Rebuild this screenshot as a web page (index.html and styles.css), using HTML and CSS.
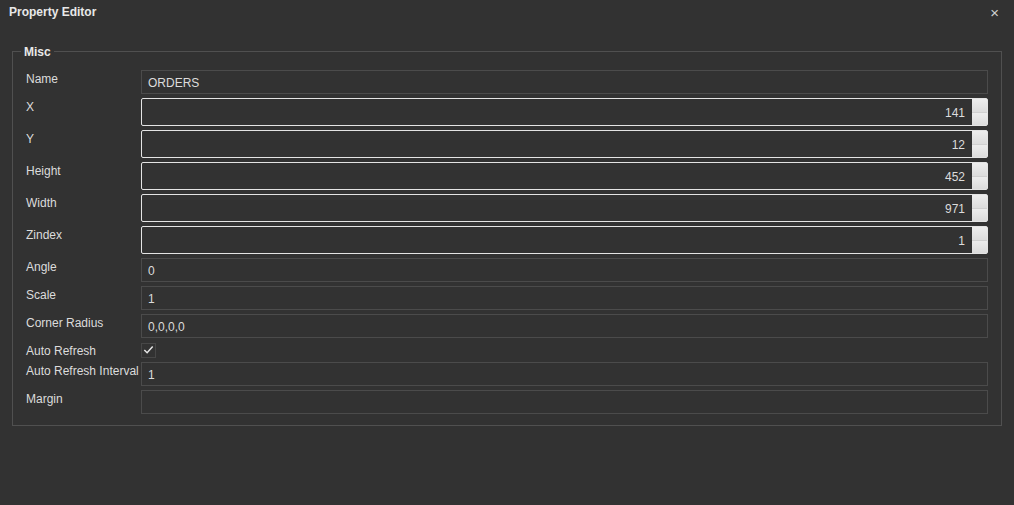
FILE: index.html
```html
<!DOCTYPE html>
<html>
<head>
<meta charset="utf-8">
<link rel="stylesheet" href="styles.css">
</head>
<body>
<div class="window">
  <header class="titlebar">
    <span class="title">Property Editor</span>
    <span class="close">×</span>
  </header>
  <fieldset class="group">
    <legend class="legend">Misc</legend>
    <div class="grid">
      <div class="label">Name</div>
      <div class="field text"><span>ORDERS</span></div>

      <div class="label">X</div>
      <div class="field spin"><span class="num">141</span><span class="spinbtn"><i></i><i></i></span></div>

      <div class="label">Y</div>
      <div class="field spin"><span class="num">12</span><span class="spinbtn"><i></i><i></i></span></div>

      <div class="label">Height</div>
      <div class="field spin"><span class="num">452</span><span class="spinbtn"><i></i><i></i></span></div>

      <div class="label">Width</div>
      <div class="field spin"><span class="num">971</span><span class="spinbtn"><i></i><i></i></span></div>

      <div class="label">Zindex</div>
      <div class="field spin"><span class="num">1</span><span class="spinbtn"><i></i><i></i></span></div>

      <div class="label">Angle</div>
      <div class="field text"><span>0</span></div>

      <div class="label">Scale</div>
      <div class="field text"><span>1</span></div>

      <div class="label">Corner Radius</div>
      <div class="field text"><span>0,0,0,0</span></div>

      <div class="label">Auto Refresh</div>
      <div class="checkrow">
        <span class="check">
          <svg width="14" height="14" viewBox="0 0 14 14"><path d="M2.5 7 L5.5 10 L11.5 3.2" fill="none" stroke="#e6e6e6" stroke-width="1.6"/></svg>
        </span>
      </div>

      <div class="label">Auto Refresh Interval</div>
      <div class="field text"><span>1</span></div>

      <div class="label">Margin</div>
      <div class="field text"><span></span></div>
    </div>
  </fieldset>
</div>
</body>
</html>
```

FILE: styles.css
```css
html, body {
  margin: 0;
  padding: 0;
  background: #323232;
  width: 1014px;
  height: 505px;
  overflow: hidden;
}
body {
  font-family: "Liberation Sans", Arial, sans-serif;
  font-size: 12px;
  color: #dcdcdc;
}
.titlebar {
  height: 24px;
  display: flex;
  align-items: center;
  justify-content: space-between;
  padding: 0 15px 0 9px;
}
.title {
  font-weight: bold;
  color: #e8e8e8;
  font-size: 12px;
}
.close {
  font-size: 15px;
  color: #d0d0d0;
}
.group {
  margin: 19px 0 0 12px;
  width: 990px;
  box-sizing: border-box;
  border: 1px solid #505050;
  padding: 2px 13px 11px 13px;
}
.legend {
  margin-left: -5px;
  padding: 0 3px;
  font-weight: bold;
  color: #e8e8e8;
  line-height: 16px;
  position: relative;
  top: 1px;
}
.grid {
  display: grid;
  grid-template-columns: 115px 1fr;
  row-gap: 4px;
  margin-top: 9px;
}
.label {
  line-height: 16px;
  position: relative;
  top: 1px;
  color: #dcdcdc;
  white-space: nowrap;
}
.field {
  box-sizing: border-box;
  display: flex;
  align-items: center;
}
.field span {
  position: relative;
  top: 1px;
}
.text {
  height: 24px;
  border: 1px solid #4b4b4b;
  padding-left: 6px;
}
.spin {
  height: 28px;
  border: 1px solid #e4e4e4;
  border-radius: 2px;
  justify-content: flex-end;
}
.num {
  padding-right: 7px;
}
.field .spinbtn {
  top: 0;
  width: 15px;
  height: 26px;
  display: flex;
  flex-direction: column;
  background: #e2e2e2;
}
.spinbtn i {
  flex: 1;
  background: linear-gradient(#ededed, #dcdcdc);
  border-bottom: 1px solid #d0d0d0;
}
.spinbtn i:last-child {
  border-bottom: none;
}
.checkrow {
  height: 16px;
  display: flex;
  align-items: center;
}
.check {
  width: 15px;
  height: 15px;
  box-sizing: border-box;
  border: 1px solid #474747;
  display: flex;
  align-items: center;
  justify-content: center;
}
.check svg {
  display: block;
}
```
